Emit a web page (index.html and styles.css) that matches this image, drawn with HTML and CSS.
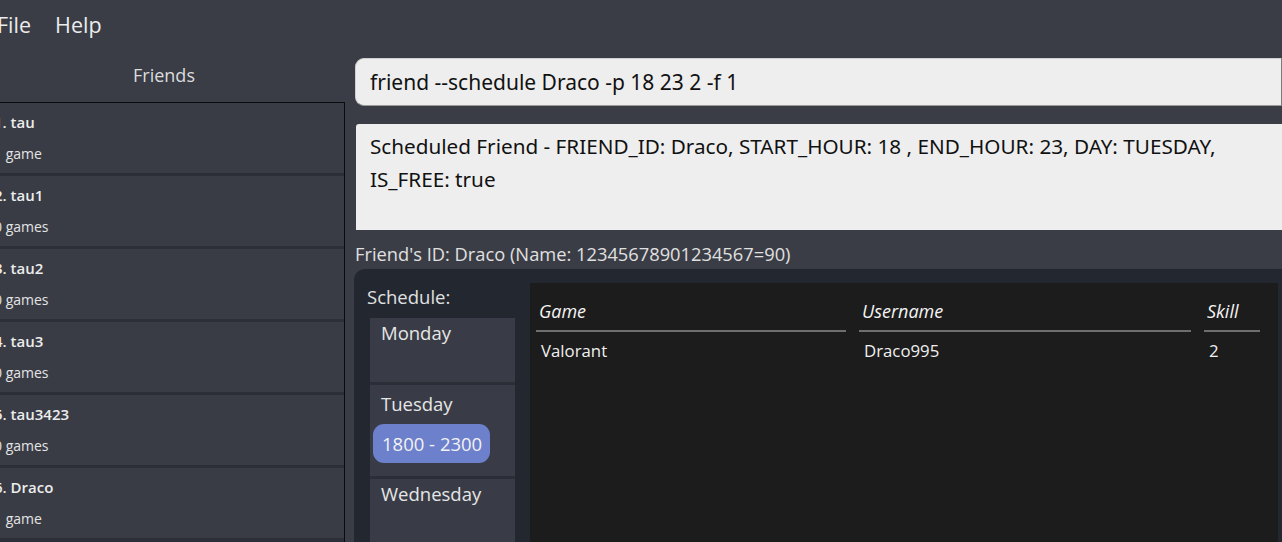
FILE: index.html
```html
<!DOCTYPE html>
<html>
<head>
<meta charset="utf-8">
<link rel="stylesheet" href="styles.css">
</head>
<body>
<div class="app">
  <div class="menubar">
    <span class="menu-item">File</span>
    <span class="menu-item">Help</span>
  </div>
  <div class="main">
    <div class="left">
      <div class="left-title">Friends</div>
      <div class="list">
        <div class="card"><div class="name">1. tau</div><div class="games">1 game</div></div>
        <div class="card"><div class="name">2. tau1</div><div class="games">0 games</div></div>
        <div class="card"><div class="name">3. tau2</div><div class="games">0 games</div></div>
        <div class="card"><div class="name">4. tau3</div><div class="games">0 games</div></div>
        <div class="card"><div class="name">5. tau3423</div><div class="games">0 games</div></div>
        <div class="card"><div class="name">6. Draco</div><div class="games">1 game</div></div>
      </div>
    </div>
    <div class="right">
      <div class="command">friend --schedule Draco -p 18 23 2 -f 1</div>
      <div class="result">Scheduled Friend - FRIEND_ID: Draco, START_HOUR: 18 , END_HOUR: 23, DAY: TUESDAY,<br>IS_FREE: true</div>
      <div class="friend-id">Friend's ID: Draco (Name: 12345678901234567=90)</div>
      <div class="detail">
        <div class="schedule">
          <div class="schedule-title">Schedule:</div>
          <div class="days">
            <div class="day day-short"><div class="day-name">Monday</div></div>
            <div class="day day-tue"><div class="day-name">Tuesday</div><div class="pill">1800 - 2300</div></div>
            <div class="day day-short"><div class="day-name">Wednesday</div></div>
          </div>
        </div>
        <div class="table">
          <div class="th">Game</div>
          <div class="th">Username</div>
          <div class="th">Skill</div>
          <div class="td td-first">Valorant</div>
          <div class="td">Draco995</div>
          <div class="td">2</div>
        </div>
      </div>
    </div>
  </div>
</div>
</body>
</html>
```
FILE: styles.css
```css
* { box-sizing: border-box; }
html, body {
  margin: 0;
  padding: 0;
  width: 1282px;
  height: 542px;
  overflow: hidden;
  background: #3a3d46;
}
body {
  font-family: "Open Sans", "Noto Sans", sans-serif;
  color: #e2e2e2;
}
.app {
  width: 1302px;
  height: 542px;
  margin-left: -20px;
  display: flex;
  flex-direction: column;
}
.menubar {
  height: 48px;
  display: flex;
  align-items: center;
  padding-left: 17px;
  gap: 24px;
  padding-bottom: 0;
}
.menu-item {
  font-size: 21.5px;
  color: #ececec;
}
.main {
  flex: 1;
  display: flex;
  min-height: 0;
}
.left {
  width: 365px;
  display: flex;
  flex-direction: column;
}
.left-title {
  height: 54px;
  display: flex;
  align-items: center;
  justify-content: center;
  font-size: 18px;
  color: #dcdcdc;
  padding-bottom: 0;
  padding-left: 3px;
}
.list {
  flex: 1;
  border: 1px solid #0b0b0d;
  border-bottom: none;
  background: #2c2f37;
  display: flex;
  flex-direction: column;
  gap: 3px;
  overflow: hidden;
}
.card {
  height: 70px;
  flex: none;
  background: #393c45;
  padding: 8px 0 0 13px;
}
.name {
  font-size: 15px;
  line-height: 22px;
  color: #ededed;
  font-weight: 600;
}
.games {
  font-size: 14px;
  line-height: 22px;
  margin-top: 10px;
  color: #e4e4e4;
}
.right {
  flex: 1;
  margin-left: 9px;
  display: flex;
  flex-direction: column;
  padding-top: 10px;
  min-width: 0;
}
.command {
  height: 48px;
  margin-left: 1px;
  background: #eeeeee;
  border: 1px solid #9a9a9a;
  border-right: 1px solid #7a7a7a;
  border-radius: 9px 0 0 9px;
  border-left-color: #cfcfcf;
  border-top-color: #d0d0d0;
  padding-left: 14px;
  display: flex;
  align-items: center;
  font-family: "Noto Sans", "Open Sans", sans-serif;
  font-size: 21px;
  color: #111;
  padding-bottom: 1px;
}
.result {
  margin-top: 18px;
  margin-left: 2px;
  height: 106px;
  background: #eeeeee;
  border-radius: 3px 0 0 0;
  padding: 6px 0 0 14px;
  font-family: "Noto Sans", "Open Sans", sans-serif;
  font-size: 20.7px;
  line-height: 33px;
  color: #111;
}
.friend-id {
  height: 39px;
  padding-top: 11px;
  margin-left: 1px;
  font-size: 18.3px;
  line-height: 25px;
  color: #e0e0e0;
}
.detail {
  flex: 1;
  background: #232830;
  border-radius: 11px 0 0 0;
  display: flex;
  padding: 14px 4px 0 13px;
  min-height: 0;
}
.schedule {
  width: 148px;
  display: flex;
  flex-direction: column;
}
.schedule-title {
  height: 35px;
  font-size: 18.5px;
  line-height: 28px;
  color: #e0e0e0;
}
.days {
  margin-left: 3px;
  width: 145px;
  flex: 1;
  background: #2b2e36;
  display: flex;
  flex-direction: column;
  gap: 3px;
}
.day {
  background: #393c46;
  padding: 2px 0 0 11px;
}
.day-short { height: 64px; flex: none; }
.day-short:last-child { flex: 1; height: auto; }
.day-tue { height: 91px; flex: none; padding-top: 6px; }
.day-name {
  font-size: 18.5px;
  line-height: 26px;
  color: #e6e6e6;
}
.pill {
  margin: 7px 0 0 -8px;
  width: 117px;
  height: 39px;
  border-radius: 11px;
  background: #6c80cc;
  color: #f2f2f2;
  font-size: 18.5px;
  display: flex;
  align-items: center;
  padding-left: 9px;
}
.table {
  margin-left: 15px;
  flex: 1;
  background: #1c1c1c;
  display: grid;
  grid-template-columns: 310px 332px 56px;
  column-gap: 13px;
  align-content: start;
  padding-left: 6px;
}
.th {
  font-style: italic;
  font-size: 18px;
  line-height: 26px;
  padding: 15px 0 6px 3px;
  color: #f4f4f4;
  border-bottom: 2px solid #6e6e6e;
}
.td {
  font-size: 16.8px;
  line-height: 24px;
  padding: 7px 0 0 5px;
  color: #f0f0f0;
}
```
